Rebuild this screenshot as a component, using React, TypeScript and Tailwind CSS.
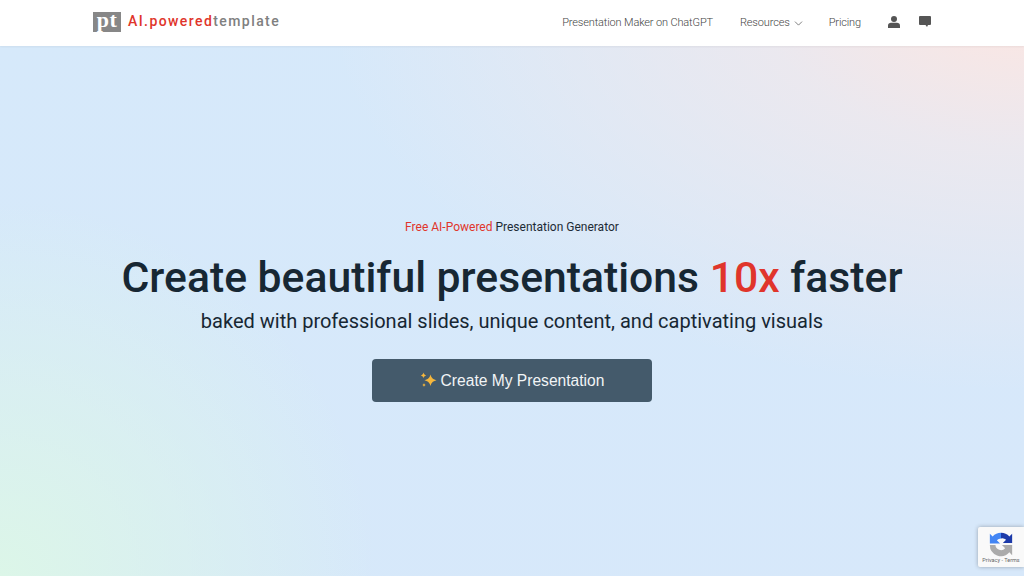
import { ChevronDown } from "lucide-react";

function Logo() {
  return (
    <div className="flex items-center gap-[7px]">
      <div className="flex h-[20px] w-[28px] items-start justify-center bg-[#878787]">
        <span className="font-['Liberation_Serif',serif] text-[22px] leading-[16px] font-bold tracking-[0.5px] text-white">pt</span>
      </div>
      <span className="text-[14px] font-medium tracking-[1.42px] text-[#808080]">
        <span className="text-[#e0352b]">AI.powered</span>template
      </span>
    </div>
  );
}

function UserIcon() {
  return (
    <svg viewBox="0 0 12 12" className="h-[12px] w-[12px]" fill="currentColor">
      <circle cx="6" cy="3" r="3" />
      <path d="M0 12V9.500C0 7.800 1.400 6.800 3 6.800h6c1.600 0 3 1 3 2.700V12z" />
    </svg>
  );
}

function ChatIcon() {
  return (
    <svg viewBox="0 0 12 11" className="h-[11px] w-[12px]" fill="currentColor">
      <path d="M1 0h10a1 1 0 0 1 1 1v7a1 1 0 0 1-1 1H9l-1 2-1.500-2H1a1 1 0 0 1-1-1V1a1 1 0 0 1 1-1z" />
    </svg>
  );
}

function Header() {
  return (
    <header className="relative z-10 h-[46px] bg-white shadow-[0_1px_2px_rgba(0,0,0,0.05)]">
      <div className="flex h-full items-center justify-between px-[93px]">
        <div className="-mt-[3px]">
          <Logo />
        </div>
        <nav className="flex items-center text-[11px] font-light tracking-[-0.14px] text-[#444]">
          <a className="mr-[27px]">Presentation Maker on ChatGPT</a>
          <a className="mr-[24px] flex items-center gap-[2px]">
            Resources <ChevronDown className="h-[13px] w-[13px]" strokeWidth={1.25} />
          </a>
          <a className="mr-[27px]">Pricing</a>
          <div className="-mt-[3px] mr-[19px] text-[#555]">
            <UserIcon />
          </div>
          <div className="-mt-[3px] text-[#555]">
            <ChatIcon />
          </div>
        </nav>
      </div>
    </header>
  );
}

function Sparkles() {
  return (
    <svg viewBox="0 0 17 17" className="h-[17px] w-[17px]" fill="#f6b73c">
      <path d="M10.500 2.500c.8 3.200 1.800 4.400 6 5.800-4.200 1.400-5.200 2.600-6 5.800-.8-3.200-1.800-4.400-6-5.800 4.200-1.400 5.200-2.600 6-5.800z" />
      <path d="M3.500 .5c.4 1.700.9 2.300 2.700 2.900-1.800.6-2.300 1.200-2.700 2.900-.4-1.700-.9-2.300-2.700-2.900C2.600 2.800 3.100 2.200 3.500 .5z" />
      <path d="M4 11c.3 1.200.6 1.600 1.900 2-1.300.4-1.600.8-1.900 2-.3-1.200-.6-1.600-1.900-2 1.300-.4 1.600-.8 1.900-2z" />
    </svg>
  );
}

function Hero() {
  return (
    <main className="flex flex-col items-center pt-[172px]">
      <p className="text-[12px] leading-[18px] text-[#1d2b36]">
        <span className="text-[#e0352b]">Free AI-Powered</span> Presentation Generator
      </p>
      <h1 className="mt-[13px] text-[42.7px] leading-[56px] font-medium text-[#172733]">
        Create beautiful presentations <span className="text-[#e0352b]">10x</span> faster
      </h1>
      <h2 className="mt-[1px] text-[20px] leading-[30px] text-[#172733]">
        baked with professional slides, unique content, and captivating visuals
      </h2>
      <button className="mt-[23px] flex h-[43px] w-[280px] items-center justify-center gap-[4px] rounded-[4px] bg-[#445a6b] font-['Liberation_Sans',sans-serif] text-[15.6px] text-[#f1f4f6]">
        <Sparkles />
        Create My Presentation
      </button>
    </main>
  );
}

function RecaptchaBadge() {
  return (
    <div className="absolute right-0 bottom-[9px] flex h-[40px] w-[46px] flex-col items-center rounded-l-[2px] bg-[#f9f9f9] pt-[4px] shadow-[0_0_4px_rgba(0,0,0,0.3)]">
      <svg viewBox="0 0 28 28" className="h-[26px] w-[26px]">
        <path d="M14 2a12 12 0 0 1 9 4l3-3v10H16l3.500-3.500A6 6 0 0 0 14 8z" fill="#1c3aa9" />
        <path d="M14 2v6a6 6 0 0 0-4.500 2l3.500 3.500H2V3l3 3a12 12 0 0 1 9-4z" fill="#4285f4" />
        <path d="M2 15h6a6 6 0 0 0 10.500 3.500L15 15h11v11l-3-3A12 12 0 0 1 2 15z" fill="#ababab" />
      </svg>
      <span className="text-[5.500px] leading-[6px] whitespace-nowrap text-[#666]">Privacy - Terms</span>
    </div>
  );
}

export default function App() {
  return (
    <div className="relative h-[576px] w-[1024px] overflow-hidden bg-[#d5e8fb] bg-[radial-gradient(ellipse_at_100%_0%,#fde6e1_0%,rgba(240,232,236,0.8)_18%,rgba(213,232,251,0)_48%),radial-gradient(circle_at_0%_100%,#dcf6e8_0%,rgba(220,246,232,0)_32%),linear-gradient(135deg,#d6e9fa_0%,#d7e8fa_100%)] font-['Roboto',sans-serif]">
      <Header />
      <Hero />
      <RecaptchaBadge />
    </div>
  );
}
